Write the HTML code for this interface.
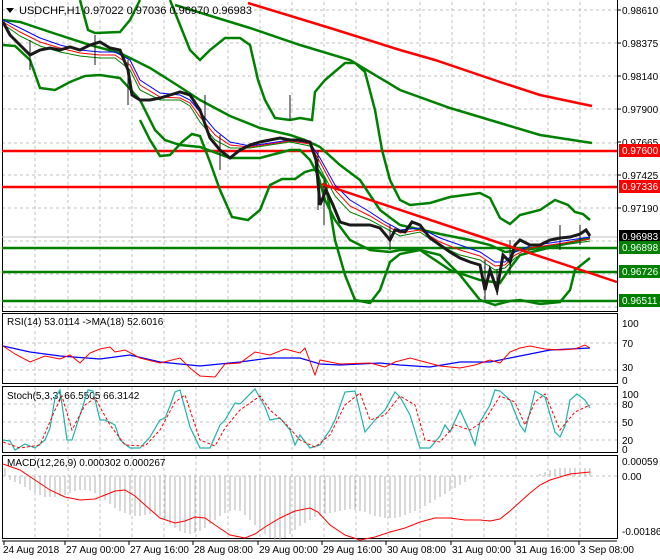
<!DOCTYPE html>
<html><head><meta charset="utf-8"><style>
html,body{margin:0;padding:0;background:#fff;}
svg{display:block;font-family:"Liberation Sans",sans-serif;font-size:10px;}
</style></head><body>
<svg width="660" height="560" viewBox="0 0 660 560" xmlns="http://www.w3.org/2000/svg">
<rect width="660" height="560" fill="#fff"/>
<g stroke="#c0c0c0" stroke-dasharray="3,3" stroke-width="1">
<path d="M35 2V311M68 2V311M100 2V311M132 2V311M164 2V311M196 2V311M228 2V311M260 2V311M292 2V311M324 2V311M356 2V311M388 2V311M420 2V311M452 2V311M484 2V311M516 2V311M548 2V311M580 2V311"/>
<path d="M2 10H617M2 43H617M2 76H617M2 109H617M2 143H617M2 175H617M2 208H617M2 241H617M2 274H617M2 307H617"/>
<path d="M35 313V383M68 313V383M100 313V383M132 313V383M164 313V383M196 313V383M228 313V383M260 313V383M292 313V383M324 313V383M356 313V383M388 313V383M420 313V383M452 313V383M484 313V383M516 313V383M548 313V383M580 313V383"/>
<path d="M2 343H617M2 370H617"/>
<path d="M35 387V452M68 387V452M100 387V452M132 387V452M164 387V452M196 387V452M228 387V452M260 387V452M292 387V452M324 387V452M356 387V452M388 387V452M420 387V452M452 387V452M484 387V452M516 387V452M548 387V452M580 387V452"/>
<path d="M2 404H617M2 422H617M2 440H617"/>
<path d="M35 456V538M68 456V538M100 456V538M132 456V538M164 456V538M196 456V538M228 456V538M260 456V538M292 456V538M324 456V538M356 456V538M388 456V538M420 456V538M452 456V538M484 456V538M516 456V538M548 456V538M580 456V538"/>
<path d="M2 476H617"/>
</g>
<g stroke="#000" fill="none" stroke-width="1">
<path d="M2.5 0V311.5H617.5V0"/>
<rect x="2.5" y="313.5" width="615" height="70"/>
<rect x="2.5" y="386.5" width="615" height="66"/>
<rect x="2.5" y="455.5" width="615" height="83"/>
<path d="M2 541H617M4 541v4M65 541v4M129 541v4M193 541v4M258 541v4M322 541v4M386 541v4M451 541v4M515 541v4M579 541v4"/>
<path d="M617 10h4M617 43h4M617 76h4M617 109h4M617 142h4M617 175h4M617 208h4"/>
</g>
<path d="M2 237H617" stroke="#c0c0c0"/>
<g stroke="#ff0000" stroke-width="2.5"><path d="M2 151H617M2 187H617"/></g>
<g stroke="#008000" stroke-width="2.5"><path d="M2 248H617M2 272H617M2 301H617"/></g>
<polyline fill="none" stroke="#ff0000" stroke-width="2.5" points="248,3 330,28 400,50 435,60 500,82 540,95 592,106"/>
<polyline fill="none" stroke="#008000" stroke-width="2.5" points="175,5 250,28 300,45 350,60 400,90 450,108 500,123 540,135 592,143"/>
<polyline fill="none" stroke="#008000" stroke-width="2.5" points="80,0 88,30 95,33 120,32 130,20 140,0"/>
<polyline fill="none" stroke="#008000" stroke-width="2.5" points="170,0 180,25 190,50 200,60 210,50 225,38 240,38 250,45 258,80 265,100 275,118 290,120 300,118 312,120 315,92 325,80 345,63 355,63 365,72 375,110 382,150 390,180 400,200 410,205 430,203 450,197 480,193 490,198 500,218 510,224 520,215 540,210 555,200 568,205 575,212 583,214 590,220"/>
<polyline fill="none" stroke="#008000" stroke-width="2.5" points="140,120 150,140 160,156 170,155 182,142 192,134 200,136 210,162 220,190 232,217 248,220 260,210 270,185 282,179 295,179 305,172 312,170 318,170 325,180 335,240 345,275 355,300 370,303 380,290 390,262 400,254 420,250 440,255 460,275 480,300 495,305 510,301 520,300 540,304 560,302 570,290 575,270 590,258"/>
<polyline fill="none" stroke="#008000" stroke-width="2.5" points="3,20 20,22 53,33 90,45 120,53 150,68 177,85 200,100 230,116 260,128 290,135 305,140 320,147 340,165 360,180 380,210 400,225 440,234 470,240 490,245 505,252 520,250 560,245 590,238"/>
<polyline fill="none" stroke="#008000" stroke-width="2.5" points="3,45 15,46 30,60 40,88 55,90 70,82 85,76 100,75 120,78 140,100 155,130 165,140 180,145 200,147 230,158 260,158 290,150 300,150 310,160 318,175 325,200 335,220 350,240 370,250 390,252 400,250 420,250 432,258 450,270 480,280 500,283 510,268 520,255 560,245 590,238"/>
<polyline fill="none" stroke="#0000ff" stroke-width="1" points="3,20 20,28 40,38 60,45 80,50 100,52 115,52 130,60 140,80 160,93 180,95 190,100 200,112 215,130 230,142 250,146 270,143 290,140 310,143 320,158 335,185 350,200 370,212 385,222 400,230 420,228 440,238 460,245 480,252 495,262 505,262 515,252 530,246 550,243 570,240 590,237"/>
<polyline fill="none" stroke="#ff0000" stroke-width="1" points="3,22 20,32 40,42 60,48 80,53 100,55 115,55 130,65 140,85 160,97 180,98 190,103 200,117 215,135 230,145 250,147 270,144 290,141 310,144 320,162 335,190 350,206 370,216 385,225 400,233 420,230 440,242 460,250 480,256 495,266 505,265 515,255 530,248 550,245 570,242 590,239"/>
<polyline fill="none" stroke="#008000" stroke-width="1" points="3,24 20,36 40,46 60,52 80,56 100,58 115,58 130,70 140,90 160,100 180,100 190,106 200,122 215,140 230,148 250,148 270,145 290,142 310,146 320,168 335,196 350,212 370,220 385,228 400,236 420,232 440,246 460,255 480,260 495,270 505,268 515,258 530,250 550,247 570,244 590,241"/>
<polyline fill="none" stroke="#1a1a1a" stroke-width="3" points="3,22 10,35 15,40 20,45 30,55 40,50 50,48 60,50 70,47 80,50 90,45 100,42 110,48 120,50 128,70 132,95 140,100 150,100 160,98 170,95 180,92 190,95 200,110 210,138 220,150 230,158 240,150 250,145 260,142 270,140 280,138 290,140 300,140 310,142 316,160 320,205 326,190 333,205 340,222 350,225 360,225 370,225 380,228 390,240 395,230 405,232 412,222 420,225 430,238 440,245 450,252 460,258 470,262 480,265 485,290 490,270 497,290 503,255 510,262 515,245 520,240 530,245 540,245 550,240 560,238 570,237 580,234 586,230 590,236"/>
<g stroke="#1a1a1a" stroke-width="1"><path d="M30 40v30M95 35v30M128 60v45M205 95v30M220 135v35M290 95v25M318 150v60M324 180v45M390 225v25M485 260v40M497 270v25M510 240v35M560 225v25M580 225v20"/></g>
<polyline fill="none" stroke="#ff0000" stroke-width="2.5" points="322,184 617,282"/>
<path d="M6 8h8l-4 5z" fill="#000"/>
<text x="19" y="14" font-size="11">USDCHF,H1  0.97022 0.97036 0.96970 0.96983</text>
<g font-size="10" fill="#000">
<text x="622" y="14">0.98610</text><text x="622" y="47">0.98375</text><text x="622" y="80">0.98140</text><text x="622" y="113">0.97900</text><text x="622" y="146">0.97665</text><text x="622" y="179">0.97425</text><text x="622" y="212">0.97190</text>
</g>
<rect x="619" y="144" width="41" height="13" fill="#ff0000"/><text x="622" y="154" fill="#fff">0.97600</text>
<rect x="619" y="180" width="41" height="13" fill="#ff0000"/><text x="622" y="190" fill="#fff">0.97336</text>
<rect x="619" y="230" width="41" height="13" fill="#000"/><text x="622" y="240" fill="#fff">0.96983</text>
<rect x="619" y="241" width="41" height="13" fill="#008000"/><text x="622" y="251" fill="#fff">0.96898</text>
<rect x="619" y="265" width="41" height="13" fill="#008000"/><text x="622" y="275" fill="#fff">0.96726</text>
<rect x="619" y="294" width="41" height="13" fill="#008000"/><text x="622" y="304" fill="#fff">0.96511</text>
<text x="7" y="325">RSI(14) 53.0114  -&gt;MA(18) 52.6016</text>
<polyline fill="none" stroke="#0000ff" stroke-width="1.2" points="3,346 30,352 60,356 100,359 130,355 160,362 200,366 240,362 270,358 300,358 320,364 340,365 380,363 400,365 430,367 460,362 490,362 520,356 550,350 590,348"/>
<polyline fill="none" stroke="#ff0000" stroke-width="1" points="3,346 15,354 30,362 45,356 60,359 70,355 80,363 90,353 100,349 110,347 115,352 125,350 140,358 160,363 180,358 190,368 200,376 215,377 225,364 240,363 255,352 270,355 285,349 300,353 305,348 315,375 320,360 340,364 370,363 385,367 395,362 410,358 425,362 440,366 460,368 475,365 490,360 500,363 510,352 520,348 530,346 545,349 560,350 575,349 585,345 590,348"/>
<g font-size="10"><text x="622" y="327">100</text><text x="622" y="347">70</text><text x="622" y="371">30</text><text x="622" y="384">0</text></g>
<text x="7" y="399">Stoch(5,3,3) 66.5505 66.3142</text>
<polyline fill="none" stroke="#20b2aa" stroke-width="1.2" points="3,440 10,441 15,450 25,444 35,448 45,440 50,428 55,398 60,390 67,440 72,440 80,415 88,390 93,391 100,420 105,420 115,425 120,440 130,448 140,448 150,437 160,420 165,418 170,406 175,392 180,390 190,427 200,448 210,448 220,425 225,420 235,403 240,404 255,389 260,398 265,407 270,420 280,418 290,430 295,445 300,435 310,448 320,445 330,430 335,420 345,392 355,391 365,432 375,420 385,410 395,392 400,397 410,415 420,448 430,448 440,436 445,425 450,432 460,410 470,432 475,445 480,422 490,405 495,390 500,391 510,400 520,425 525,432 535,391 545,397 555,432 560,437 565,426 570,400 577,394 585,400 590,408"/>
<polyline fill="none" stroke="#ff0000" stroke-width="1" stroke-dasharray="3,2" points="3,442 20,448 40,445 55,410 62,396 72,430 85,405 95,398 110,425 125,445 145,446 160,430 175,402 185,395 200,440 215,446 225,428 240,410 260,396 270,410 285,423 300,440 315,447 330,435 345,405 360,393 370,420 385,415 400,396 415,405 425,440 440,442 455,425 470,430 485,420 500,396 515,402 525,425 535,402 545,394 560,430 575,412 590,405"/>
<g font-size="10"><text x="622" y="398">100</text><text x="622" y="408">80</text><text x="622" y="426">50</text><text x="622" y="444">20</text><text x="622" y="453">0</text></g>
<g stroke="#b0b0b0" stroke-width="1">
<path d="M5 476v-8M10 476v4M15 476v6M20 476v8M25 476v11M30 476v14M35 476v17M40 476v19M45 476v21M50 476v21M55 476v21M60 476v20M65 476v19M70 476v17M75 476v15M80 476v14M85 476v14M90 476v15M95 476v17M100 476v20M105 476v24M110 476v28M115 476v32M120 476v35M125 476v37M130 476v39M135 476v40M140 476v40M145 476v39M150 476v38M155 476v38M160 476v40M165 476v44M170 476v48M175 476v52M180 476v55M185 476v57M190 476v58M195 476v57M200 476v55M205 476v52M210 476v48M215 476v44M220 476v40M225 476v37M230 476v35M235 476v34M240 476v35M245 476v39M250 476v44M255 476v49M260 476v54M265 476v58M270 476v62M275 476v64M280 476v64M285 476v62M290 476v58M295 476v54M300 476v50M305 476v47M310 476v44M315 476v41M320 476v40M325 476v38M330 476v37M335 476v36M340 476v35M345 476v34M350 476v33M355 476v34M360 476v35M365 476v36M370 476v38M375 476v40M380 476v41M385 476v42M390 476v42M395 476v42M400 476v41M405 476v39M410 476v37M415 476v35M420 476v33M425 476v30M430 476v27M435 476v24M440 476v21M445 476v18M450 476v15M455 476v12M460 476v9M465 476v6M470 476v3M540 476v-2M545 476v-4M550 476v-6M555 476v-7M560 476v-8M565 476v-8M570 476v-8M575 476v-8M580 476v-8M585 476v-8M590 476v-8"/>
</g>
<polyline fill="none" stroke="#ff0000" stroke-width="1" points="3,464 20,470 35,480 50,490 65,497 80,500 95,499 105,495 115,491 125,490 135,496 145,505 160,518 175,523 185,521 195,517 205,518 215,525 230,535 245,538 255,534 265,527 280,518 295,511 310,508 318,512 330,525 345,535 360,540 375,537 390,532 405,528 420,522 435,518 450,518 465,520 480,520 490,521 500,519 510,511 520,502 530,493 540,485 550,480 560,477 570,474 580,473 590,472"/>
<text x="7" y="466">MACD(12,26,9) 0.000302 0.000267</text>
<g font-size="10"><text x="622" y="465">0.00059</text><text x="622" y="480">0.00</text><text x="622" y="535">-0.00186</text></g>
<g font-size="10">
<text x="3" y="553">24 Aug 2018</text><text x="66" y="553">27 Aug 00:00</text><text x="130" y="553">27 Aug 16:00</text><text x="194" y="553">28 Aug 08:00</text><text x="259" y="553">29 Aug 00:00</text><text x="323" y="553">29 Aug 16:00</text><text x="387" y="553">30 Aug 08:00</text><text x="452" y="553">31 Aug 00:00</text><text x="516" y="553">31 Aug 16:00</text><text x="580" y="553">3 Sep 08:00</text>
</g>
</svg>
</body></html>
